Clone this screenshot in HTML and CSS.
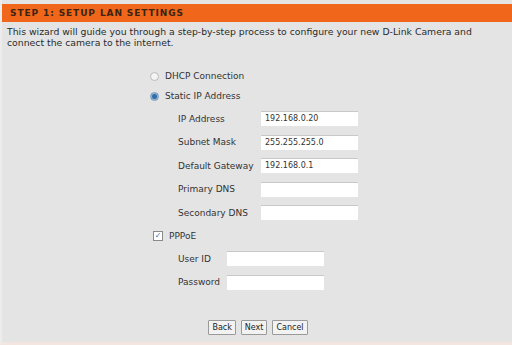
FILE: index.html
```html
<!DOCTYPE html>
<html lang="en">
<head>
    <meta charset="UTF-8">
    <title>Setup Wizard</title>
    <link rel="stylesheet" href="styles.css">
</head>
<body>
    <div class="page">
        <div class="step-title">STEP 1: SETUP LAN SETTINGS</div>
        <p class="intro">This wizard will guide you through a step-by-step process to configure your new D-Link Camera and connect the camera to the internet.</p>

        <div class="form">
            <label class="opt"><span class="radio"></span>DHCP Connection</label>
            <label class="opt"><span class="radio on"></span>Static IP Address</label>

            <div class="fields">
                <span class="lbl">IP Address</span><span class="box">192.168.0.20</span>
                <span class="lbl">Subnet Mask</span><span class="box">255.255.255.0</span>
                <span class="lbl">Default Gateway</span><span class="box">192.168.0.1</span>
                <span class="lbl">Primary DNS</span><span class="box"></span>
                <span class="lbl">Secondary DNS</span><span class="box"></span>
            </div>

            <label class="opt"><span class="check">&#10003;</span>PPPoE</label>

            <div class="fields short">
                <span class="lbl">User ID</span><span class="box"></span>
                <span class="lbl">Password</span><span class="box"></span>
            </div>
        </div>

        <div class="control">
            <button class="btn">Back</button>
            <button class="btn">Next</button>
            <button class="btn">Cancel</button>
        </div>
    </div>
</body>
</html>
```

FILE: styles.css
```css
*{
    box-sizing: border-box;
}

body{
    margin: 0;
    background: #e4e4e4;
    font-family: "DejaVu Sans", Verdana, sans-serif;
    font-size: 9px;
    color: #2b2b2b;
}

.page{
    width: 512px;
    height: 345px;
    padding-top: 4px;
    border-left: 2px solid #ececec;
    border-bottom: 3px solid #f3e6e0;
}

.step-title{
    height: 18px;
    background: #f0661a;
    color: #3b2412;
    font-weight: bold;
    font-size: 9px;
    letter-spacing: 0.9px;
    line-height: 18px;
    padding-left: 8px;
}

.intro{
    margin: 4px 0 0 5px;
    width: 482px;
    line-height: 11px;
    font-size: 9.3px;
}

.form{
    padding-left: 148px;
    margin-top: 18px;
}

.opt{
    display: flex;
    align-items: center;
    height: 20px;
    gap: 6px;
    color: #333;
}

.radio{
    width: 9px;
    height: 9px;
    border-radius: 50%;
    border: 1px solid #b9b9b9;
    background: #f4f4f4;
}

.radio.on{
    background: radial-gradient(circle, #2f6fa8 0 2px, #8fb4d6 3px);
    border-color: #7a9cbc;
}

.check{
    width: 10px;
    height: 10px;
    border: 1px solid #8a8a8a;
    background: #fff;
    color: #4a6fa0;
    font-size: 8px;
    line-height: 8px;
    text-align: center;
    margin-left: 3px;
}

.fields{
    display: grid;
    grid-template-columns: 83px 97px;
    row-gap: 8.5px;
    padding-left: 28px;
    margin: 5px 0 6px;
    align-items: center;
}

.fields.short{
    grid-template-columns: 49px 97px;
    margin-top: 5px;
}

.lbl{
    color: #333;
}

.box{
    height: 15px;
    background: #fff;
    border-top: 1px solid #c8c8c8;
    font-size: 8px;
    line-height: 14px;
    padding-left: 4px;
    color: #333;
}

.control{
    display: flex;
    justify-content: center;
    gap: 5px;
    margin-top: 30px;
    padding-left: 2px;
}

.btn{
    font-family: "DejaVu Sans", Verdana, sans-serif;
    font-size: 8px;
    height: 15px;
    padding: 0 3px;
    background: #f2f2f2;
    border: 1px solid #9a9a9a;
    border-radius: 1px;
    color: #222;
}
```
